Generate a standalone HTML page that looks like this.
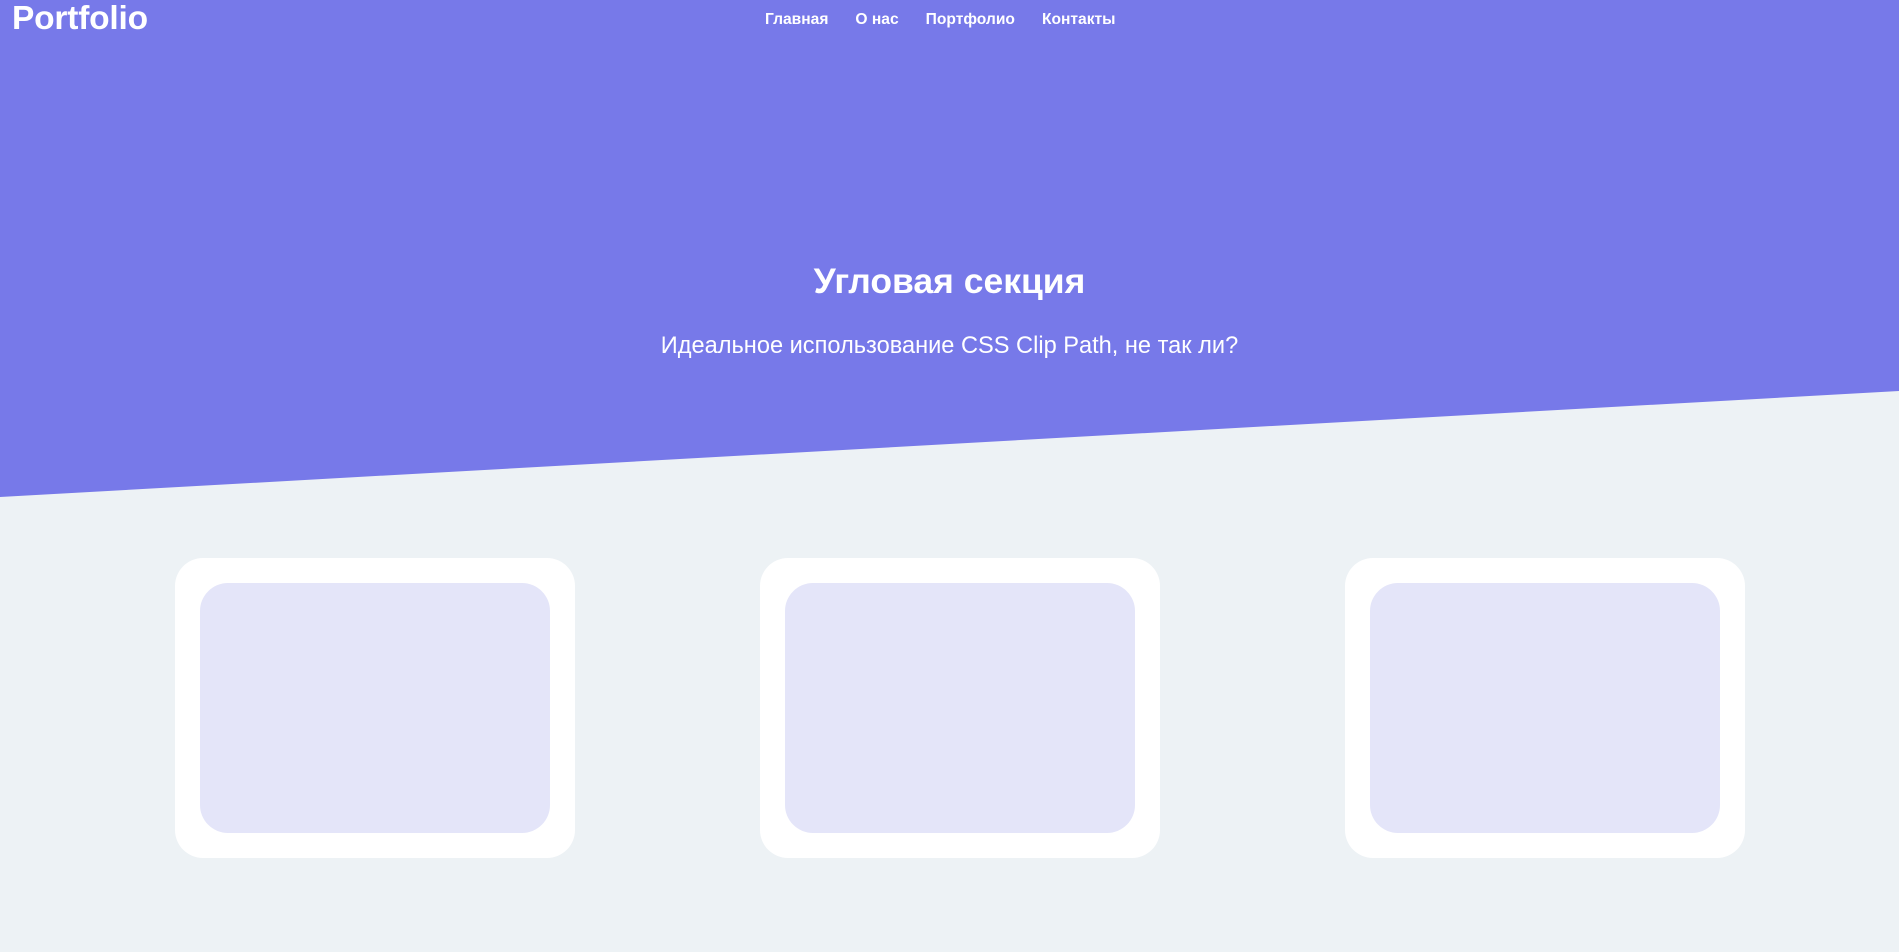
<!DOCTYPE html>
<html><head><meta charset="utf-8"><style>
*{margin:0;padding:0;box-sizing:border-box}
html,body{width:1899px;height:952px;overflow:hidden;background:#edf2f5;font-family:"Liberation Sans","DejaVu Sans",sans-serif}
.hero{position:absolute;left:0;top:0;width:1899px;height:500px;background:#7779e9;clip-path:polygon(0 0,100% 0,100% 391px,0 497px)}
.logo{position:absolute;left:12px;top:0px;font-size:33.5px;font-weight:bold;color:#fff;letter-spacing:-0.2px}
nav{position:absolute;left:765px;top:11px;font-size:15.6px;font-weight:bold;color:#fff}
nav span{margin-right:27px}
h1{position:absolute;left:0;width:1899px;text-align:center;top:261px;font-size:35.5px;color:#fff}
p.sub{position:absolute;left:0;width:1899px;text-align:center;top:333px;font-size:23.6px;color:#fff}
.card{position:absolute;top:558px;width:400px;height:300px;background:#fff;border-radius:28px}
.card div{position:absolute;left:25px;top:25px;width:350px;height:250px;background:#e4e5f9;border-radius:28px}
</style></head><body>
<div class="hero"></div>
<div class="logo">Portfolio</div>
<nav><span>Главная</span><span>О нас</span><span>Портфолио</span><span>Контакты</span></nav>
<h1>Угловая секция</h1>
<p class="sub">Идеальное использование CSS Clip Path, не так ли?</p>
<div class="card" style="left:175px"><div></div></div>
<div class="card" style="left:760px"><div></div></div>
<div class="card" style="left:1345px"><div></div></div>
</body></html>
